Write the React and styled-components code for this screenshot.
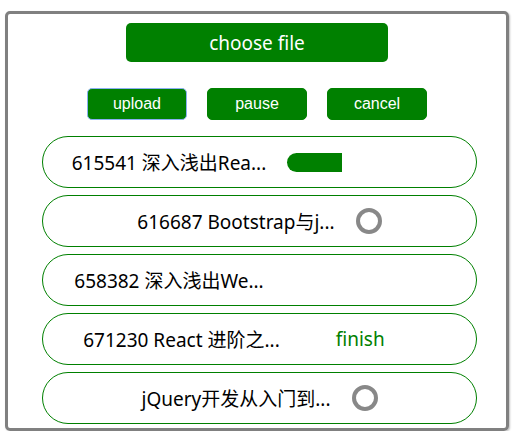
import React from 'react'
import styled, { createGlobalStyle } from 'styled-components'

const GlobalStyle = createGlobalStyle`
    body {
        margin: 0;
        background: #fff;
        font-family: "Noto Sans", "Noto Sans CJK SC", sans-serif;
    }
`;

const files = [
    { id: '615541', name: '深入浅出Rea...', status: 'progress', percent: 34 },
    { id: '616687', name: 'Bootstrap与j...', status: 'loading' },
    { id: '658382', name: '深入浅出We...', status: 'waiting' },
    { id: '671230', name: 'React 进阶之...', status: 'finish' },
    { id: '', name: 'jQuery开发从入门到...', status: 'loading' },
];

const Status = ({ file }) => {
    if (file.status === 'loading') {
        return <Spinner />;
    }
    if (file.status === 'finish') {
        return <StatusBox width={135}><Finish>finish</Finish></StatusBox>;
    }
    if (file.status === 'progress') {
        return (
            <StatusBox>
                <Bar style={{ width: `${file.percent}%` }} />
            </StatusBox>
        );
    }
    return <StatusBox />;
};

const App = () => {
    return (
        <>
            <GlobalStyle />
            <Panel>
                <ChooseButton>choose file</ChooseButton>
                <Actions>
                    <ActionButton focused>upload</ActionButton>
                    <ActionButton>pause</ActionButton>
                    <ActionButton>cancel</ActionButton>
                </Actions>
                <List>
                    {files.map((file, i) => (
                        <Row key={i}>
                            <Name>{file.id ? `${file.id} ${file.name}` : file.name}</Name>
                            <Status file={file} />
                        </Row>
                    ))}
                </List>
            </Panel>
        </>
    )
}

export default App;

const Panel = styled.div`
    box-sizing: border-box;
    width: 504px;
    height: 420px;
    margin: 11px 0 0 5px;
    padding-top: 9px;
    border: 3px solid #808080;
    border-radius: 5px;
    box-shadow: 1px 1px 2px rgba(0, 0, 0, 0.25);
    display: flex;
    flex-direction: column;
    align-items: center;
`;

const ChooseButton = styled.button`
    width: 262px;
    height: 39px;
    border: none;
    border-radius: 5px;
    background: #008000;
    color: #fff;
    font-family: "Noto Sans", sans-serif;
    font-size: 19px;
    padding: 0;
    cursor: pointer;
`;

const Actions = styled.div`
    display: flex;
    gap: 20px;
    margin-top: 26px;
`;

const ActionButton = styled.button`
    box-sizing: border-box;
    width: 100px;
    height: 32px;
    border: 1px solid ${p => p.focused ? '#8ab0f2' : '#008000'};
    border-radius: 5px;
    background: #008000;
    color: #fff;
    font-family: "Liberation Sans", Arial, sans-serif;
    font-size: 16px;
    padding: 0;
    cursor: pointer;
`;

const List = styled.div`
    align-self: stretch;
    display: flex;
    flex-direction: column;
    gap: 7px;
    margin-top: 16px;
    padding-left: 34px;
`;

const Row = styled.div`
    box-sizing: border-box;
    width: 435px;
    height: 52px;
    border: 1px solid #008000;
    border-radius: 26px;
    display: flex;
    align-items: center;
    justify-content: center;
    gap: 21px;
`;

const Name = styled.span`
    font-size: 19px;
    color: #000;
    white-space: nowrap;
`;

const StatusBox = styled.div`
    width: ${p => p.width || 160}px;
    height: 19px;
    display: flex;
    align-items: center;
`;

const Bar = styled.div`
    height: 19px;
    background: #008000;
    border-radius: 10px 0 0 10px;
`;

const Finish = styled.span`
    padding-left: 35px;
    font-size: 19px;
    color: #008000;
`;

const Spinner = styled.div`
    box-sizing: border-box;
    width: 26px;
    height: 26px;
    border: 4px solid #888;
    border-radius: 50%;
`;
